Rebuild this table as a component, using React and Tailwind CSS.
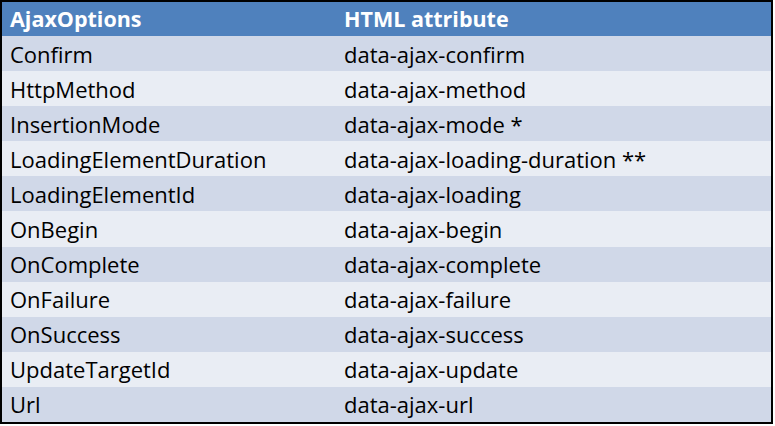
import React from "react";

const rows = [
  ["Confirm", "data-ajax-confirm"],
  ["HttpMethod", "data-ajax-method"],
  ["InsertionMode", "data-ajax-mode *"],
  ["LoadingElementDuration", "data-ajax-loading-duration **"],
  ["LoadingElementId", "data-ajax-loading"],
  ["OnBegin", "data-ajax-begin"],
  ["OnComplete", "data-ajax-complete"],
  ["OnFailure", "data-ajax-failure"],
  ["OnSuccess", "data-ajax-success"],
  ["UpdateTargetId", "data-ajax-update"],
  ["Url", "data-ajax-url"],
];

const App = () => {
  return (
    <div className="h-[426px] w-[775px] bg-white">
      <div
        className="w-[773px] border-2 border-black text-[22px] leading-none text-black"
        style={{ fontFamily: '"Open Sans", sans-serif' }}
      >
        <div className="flex h-[34px] items-center bg-[#4f81bd] text-[21.5px] font-bold text-white">
          <div className="w-[342px] pl-[8px]">AjaxOptions</div>
          <div className="flex-1">HTML attribute</div>
        </div>
        {rows.map(([name, attr], i) => (
          <div
            key={name}
            className={
              "flex h-[35.1px] items-center " +
              (i % 2 === 0 ? "bg-[#d0d8e8]" : "bg-[#e9edf4]")
            }
          >
            <div className="w-[342px] pl-[8px]">{name}</div>
            <div className="flex-1">{attr}</div>
          </div>
        ))}
      </div>
    </div>
  );
};

export default App;
